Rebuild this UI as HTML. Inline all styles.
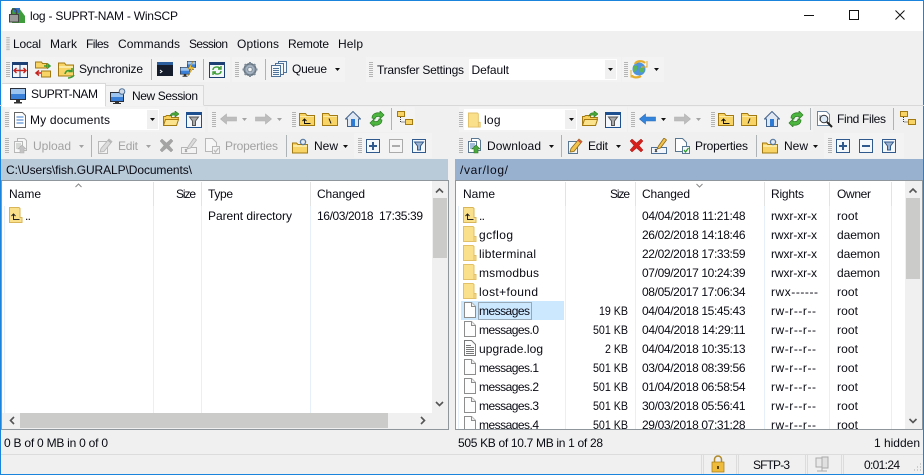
<!DOCTYPE html>
<html><head><meta charset="utf-8"><style>
html,body{margin:0;padding:0;background:#eff0ef;width:924px;height:475px;overflow:hidden}
svg{display:block;position:absolute;left:0;top:0}
text{font-family:"Liberation Sans",sans-serif;font-size:12px;fill:#0a0a14}
.d{fill:#a2a2a2}
.g{filter:grayscale(1) opacity(.45)}
</style></head><body>
<svg width="924" height="475" viewBox="0 0 924 475" xmlns="http://www.w3.org/2000/svg">
<defs>
<symbol id="grip" viewBox="0 0 4 16" overflow="visible"><path d="M0 .5h4M0 2.500h4M0 4.500h4M0 6.500h4M0 8.500h4M0 10.500h4M0 12.500h4M0 14.500h4" stroke="#b4b4b4" fill="none"/></symbol>
<symbol id="caret" viewBox="0 0 5 3" overflow="visible"><path d="M0 0h5L2.500 3z" fill="#111"/></symbol>
<symbol id="dfold" viewBox="0 0 16 16"><path d="M.5 .5h9.500l1 1v9h2v5H.5z" fill="#fbe08c" stroke="#e2c067"/><path d="M11 10.500v5" stroke="#e2c067"/></symbol>
<symbol id="dup" viewBox="0 0 16 16"><path d="M.5 .5h9.500l1 1v9h2v5H.5z" fill="#fbe08c" stroke="#d9b55a"/><path d="M4.500 7v5.500h6M2.500 9l2-2 2 2" stroke="#222" fill="none"/></symbol>
<symbol id="file" viewBox="0 0 16 16"><path d="M1.500 .5h7l4 4v11h-11z" fill="#fdfdfd" stroke="#8d8d8d"/><path d="M8.500 .5v4h4" fill="#eee" stroke="#8d8d8d"/></symbol>
<symbol id="log" viewBox="0 0 16 16"><path d="M1.500 .5h7l4 4v11h-11z" fill="#fdfdfd" stroke="#777"/><path d="M3 5.500h5M3 7.500h8M3 9.500h8M3 11.500h8M3 13.500h8" stroke="#777"/></symbol>
<symbol id="fo" viewBox="0 0 16 16"><path d="M.5 14.500V5.500h2l1-1h5v2h7l-2 8z" fill="#f7cf5a" stroke="#a37a12"/><path d="M.5 14.500l2-6h13l-2 6z" fill="#fbe38d" stroke="#a37a12"/><path d="M7 5c1-3 3-3.500 5-3V0l4 3-4 3V4c-2 0-3 0-5 1z" fill="#49a83a" stroke="#2c7a22" stroke-width=".6"/></symbol>
<symbol id="filt" viewBox="0 0 16 16"><rect x=".5" y=".5" width="15" height="15" fill="#f4f7fb" stroke="#1e4f8f"/><rect x="1" y="1" width="14" height="2" fill="#1e4f8f"/><path d="M3.500 5h9L9.500 9v4.500h-3V9z" fill="#a9a9a9" stroke="#555"/></symbol>
<symbol id="back" viewBox="0 0 18 12"><path d="M1 6L7 1v3h10v4H7v3z" fill="#3484dc" stroke="#2a6cb8" stroke-width=".6"/></symbol>
<symbol id="fwd" viewBox="0 0 18 12"><path d="M17 6l-6-5v3H1v4h10v3z" fill="#bdbdbd" stroke="#b0b0b0" stroke-width=".6"/></symbol>
<symbol id="par" viewBox="0 0 16 16"><path d="M.5 14.500v-12h6l1.500 2h7.500v10z" fill="#f7d465" stroke="#a37a12"/><path d="M1 5.500h14" stroke="#fbe9a6"/><path d="M5.500 8v4.500h6M3.500 10l2-2 2 2" stroke="#111" fill="none"/></symbol>
<symbol id="root" viewBox="0 0 16 16"><path d="M.5 14.500v-12h6l1.500 2h7.500v10z" fill="#f7d465" stroke="#a37a12"/><path d="M1 5.500h14" stroke="#fbe9a6"/><path d="M7 7.500l2 5" stroke="#111"/></symbol>
<symbol id="rootr" viewBox="0 0 16 16"><path d="M.5 14.500v-12h6l1.500 2h7.500v10z" fill="#f7d465" stroke="#a37a12"/><path d="M1 5.500h14" stroke="#fbe9a6"/><path d="M9 7.500l-2 5" stroke="#111"/></symbol>
<symbol id="home" viewBox="0 0 16 16"><path d="M8 .5L.5 8h2v7.500h11V8h2z" fill="#dfe7f2" stroke="#43648e"/><rect x="6" y="8" width="4" height="7" fill="#2e7bd6"/></symbol>
<symbol id="ref" viewBox="0 0 16 16"><path d="M3 7c0-4 4-6 8-5V0l4 4-4 4V5.500C8 5 6 6 6 8z" fill="#4cb53f" stroke="#2b7a22" stroke-width=".7"/><path d="M13 9c0 4-4 6-8 5v2l-4-4 4-4v2.500c3 .5 5-.5 5-2.500z" fill="#4cb53f" stroke="#2b7a22" stroke-width=".7"/></symbol>
<symbol id="tree" viewBox="0 0 16 16"><rect x=".5" y=".5" width="7" height="5" fill="#f7d465" stroke="#a37a12"/><rect x="8.500" y="8.500" width="7" height="5" fill="#f7d465" stroke="#a37a12"/><path d="M3.500 6v5h4" stroke="#333" stroke-dasharray="1 1" fill="none"/></symbol>
<symbol id="up" viewBox="0 0 16 16"><path d="M5.500 .5h7l2 2v10h-9z" fill="#fff" stroke="#5a7792"/><path d="M2.500 3.500h8v11h-8z" fill="#fff" stroke="#5a7792"/><path d="M4 6h5M4 8h5M4 10h3" stroke="#4a79b0"/><path d="M8 15V11H6l4-4 4 4h-2v4z" fill="#4ba83d" stroke="#2b7a22" stroke-width=".6"/></symbol>
<symbol id="edit" viewBox="0 0 16 16"><path d="M1.500 3.500h9v12h-9z" fill="#f3f7fb" stroke="#5a7792"/><path d="M3 14l1-3.500L12 1l3 2.500-8 10z" fill="#f2c24a" stroke="#8a6a20" stroke-width=".8"/><path d="M11 2l3 2.500" stroke="#d94a3a" stroke-width="1.500"/></symbol>
<symbol id="x" viewBox="0 0 15 15"><path d="M1 3l2-2 4.500 4L12 1l2 2-4 4.500 4 4.500-2 2-4.500-4L3 14l-2-2 4-4.500z" fill="#d5201b" stroke="#a81612" stroke-width=".5"/></symbol>
<symbol id="ren" viewBox="0 0 16 16"><rect x=".5" y="9.500" width="15" height="6" fill="#f3f7fb" stroke="#4e7199"/><path d="M4 11l2 3M6 11l-2 3" stroke="#333"/><path d="M6 11l1.500-3L13 0l2.500 2-6 8z" fill="#f2c24a" stroke="#8a6a20" stroke-width=".8"/></symbol>
<symbol id="prop" viewBox="0 0 16 16"><path d="M1.500 .5h7l4 4v9h-11z" fill="#fdfdfd" stroke="#5a7792"/><rect x="8.500" y="8.500" width="7" height="7" fill="#f5f8fb" stroke="#5a7792"/><path d="M10 12l1.500 2 3-4" stroke="#2f9a2f" fill="none" stroke-width="1.300"/></symbol>
<symbol id="nf" viewBox="0 0 16 16"><path d="M.5 15v-10h4l1.500 1.500h9.500V15z" fill="#f7d465" stroke="#a37a12"/><path d="M1 8h14" stroke="#fbe9a6" stroke-width="2"/><circle cx="11" cy="4" r="2.700" fill="#cfd9e6" stroke="#4e7199"/><circle cx="11" cy="4" r=".8" fill="#fff"/></symbol>
<symbol id="plus" viewBox="0 0 14 14"><rect x=".5" y=".5" width="13" height="13" fill="#f5f8fb" stroke="#30598e"/><path d="M3 7h8M7 3v8" stroke="#30598e" stroke-width="2"/></symbol>
<symbol id="minus" viewBox="0 0 14 14"><rect x=".5" y=".5" width="13" height="13" fill="#f5f8fb" stroke="#30598e"/><path d="M3 7h8" stroke="#30598e" stroke-width="2"/></symbol>
<symbol id="flt" viewBox="0 0 14 14"><rect x=".5" y=".5" width="13" height="13" fill="#f5f8fb" stroke="#30598e"/><path d="M2.500 3h9L8.500 7v4h-3V7z" fill="#9cb3cf" stroke="#30598e"/></symbol>
<symbol id="find" viewBox="0 0 17 17"><path d="M1.500 .5h9l3 3v11h-12z" fill="#fff" stroke="#6c86a1"/><path d="M3 5h5M3 7h3M3 9h3" stroke="#6c86a1"/><circle cx="8" cy="8" r="3.800" fill="#dce9f6" stroke="#333"/><path d="M11 11l5 5" stroke="#222" stroke-width="2"/></symbol>
<symbol id="mon" viewBox="0 0 16 16"><rect x=".5" y=".5" width="15" height="11" fill="#3a7fd8" stroke="#2a2f3a"/><path d="M1 1h14v5H1z" fill="#9cc4ef"/><path d="M6 12h4v2H6zM4 14h8v1.500H4z" fill="#333"/></symbol>
<symbol id="mons" viewBox="0 0 16 16"><rect x=".5" y="4.500" width="13" height="9" fill="#3a7fd8" stroke="#2a2f3a"/><path d="M1 5h12v4H1z" fill="#9cc4ef"/><path d="M5 14h4v1H5zM3 15h8v1H3z" fill="#333"/><circle cx="12" cy="3.500" r="2.800" fill="#cfd9e6" stroke="#4e7199"/></symbol>
</defs>

<!-- window frame -->
<rect width="924" height="475" fill="#eff0ef"/>
<rect width="924" height="31" fill="#fff"/>
<rect width="924" height="1" fill="#1a84dc"/>
<rect y="474" width="924" height="1" fill="#1a84dc"/>
<rect width="1" height="475" fill="#1a84dc"/><rect x="923" width="1" height="475" fill="#1a84dc"/>

<!-- title -->
<g>
<path d="M12 8h7l6 8v7H12z" fill="#3f9c3a"/><path d="M14 8h6v4l-3 2-3-2z" fill="#2e6fc4"/>
<rect x="9.500" y="14.500" width="9" height="7.500" fill="#9a9a9a" stroke="#444"/><path d="M11.500 14v-2.500a2.500 2.500 0 0 1 5 0V14" fill="none" stroke="#444" stroke-width="1.300"/>
</g>
<text x="30" y="20" textLength="148">log - SUPRT-NAM - WinSCP</text>
<path d="M804 15.500h10" stroke="#111"/>
<rect x="849.500" y="10.500" width="9" height="9" fill="none" stroke="#111"/>
<path d="M895.500 10.500l9 9M904.500 10.500l-9 9" stroke="#111"/>

<!-- menu -->
<use href="#grip" x="6" y="37" width="4" height="14"/>
<text x="13" y="48" textLength="28">Local</text><text x="50" y="48" textLength="27">Mark</text><text x="86" y="48" textLength="23">Files</text><text x="118" y="48" textLength="62">Commands</text><text x="189" y="48" textLength="39">Session</text><text x="237" y="48" textLength="42">Options</text><text x="288" y="48" textLength="41">Remote</text><text x="338" y="48" textLength="25">Help</text>

<!-- toolbar row 2 -->
<rect x="5" y="57" width="225" height="25" fill="#f2f3f2"/><rect x="232" y="57" width="113" height="25" fill="#f2f3f2"/><rect x="366" y="57" width="255" height="25" fill="#f2f3f2"/><rect x="622" y="57" width="42" height="25" fill="#f2f3f2"/>
<use href="#grip" x="6" y="62" width="4" height="16"/>
<rect x="12.500" y="62.500" width="15" height="15" fill="#f3f7fb" stroke="#1e3f73"/><rect x="13" y="63" width="14" height="2" fill="#1e3f73"/><path d="M20 63v14" stroke="#1e3f73"/><path d="M14 70.500h12M16.500 68l-2.500 2.500 2.500 2.500M23.500 68l2.500 2.500-2.500 2.500" stroke="#c9231d" fill="none" stroke-width="1.400"/>
<path d="M35.500 68v-6h6l1 1.500h4V68z" fill="#f7d465" stroke="#a37a12"/><path d="M41.500 77v-6h9v6z" fill="#f7d465" stroke="#a37a12"/><path d="M44 66h5M47 63.500l3 2.500-3 2.500" stroke="#3d9c35" stroke-width="1.500" fill="none"/><path d="M36 73h5M39 70.500l-3 2.500 3 2.500" stroke="#c9231d" stroke-width="1.500" fill="none"/>
<path d="M58.500 76v-13h6l1.500 2h7.500v11z" fill="#f7d465" stroke="#a37a12"/><path d="M59 67h14" stroke="#fbe9a6" stroke-width="2"/><path d="M65 74c1-4 4-4 7-3M72 68v3.500h-3.500M68 78c2 0 5-1 6-3" stroke="#3d9c35" stroke-width="1.500" fill="none"/>
<text x="79" y="73" textLength="64">Synchronize</text>
<path d="M151.500 59v21" stroke="#aeb3b6"/>
<rect x="157" y="62" width="16" height="14" fill="#151d2c"/><rect x="157" y="62" width="16" height="3" fill="#2c5e9e"/><path d="M160 70l2 1.500-2 1.500" stroke="#fff" fill="none"/>
<use href="#mon" x="187" y="61" width="9" height="9"/><use href="#mon" x="180" y="67" width="10" height="10"/><path d="M193 61l-5 8h3l-3 7 6-9h-3z" fill="#f2c23a" stroke="#a37a12" stroke-width=".4"/>
<path d="M203.500 59v21" stroke="#aeb3b6"/>
<rect x="209.500" y="62.500" width="15" height="15" fill="#f3f7fb" stroke="#1e3f73"/><rect x="210" y="63" width="14" height="2" fill="#1e3f73"/><path d="M213 70c0-3 4-4 7-2M221 66v3h-3M221 71c0 3-4 4-7 2M213 75v-3h3" stroke="#3d9c35" stroke-width="1.400" fill="none"/>
<use href="#grip" x="235" y="62" width="4" height="16"/>
<circle cx="250" cy="69.500" r="5.800" fill="#8f9eb0" stroke="#65727f" stroke-width="1.500"/><path d="M250 62v15M242.500 69.500h15M244.700 64.200l10.600 10.600M255.300 64.200l-10.600 10.600" stroke="#7d8a98" stroke-width="2"/><circle cx="250" cy="69.500" r="4.500" fill="#a4b2c1"/><circle cx="250" cy="69.500" r="2.200" fill="#f0f3f6" stroke="#65727f" stroke-width=".7"/>
<path d="M265.500 59v21" stroke="#aeb3b6"/>
<rect x="278.500" y="61.500" width="8" height="11" fill="#f5f8fb" stroke="#4e7199"/><rect x="275.500" y="63.500" width="8" height="11" fill="#f5f8fb" stroke="#4e7199"/><rect x="271.500" y="65.500" width="9" height="11" fill="#f5f8fb" stroke="#4e7199"/><path d="M273 68.500h6M273 70.500h6M273 72.500h6M273 74.500h6" stroke="#4e7199"/>
<text x="292" y="73" textLength="35">Queue</text>
<use href="#caret" x="335" y="68" width="5" height="3"/>
<use href="#grip" x="369" y="62" width="4" height="16"/>
<text x="377" y="74" textLength="87">Transfer Settings</text>
<rect x="469" y="59" width="148" height="21" fill="#fff"/><rect x="605" y="60" width="11" height="19" fill="#eff0ef"/>
<use href="#caret" x="608" y="68" width="5" height="3"/>
<text x="471.500" y="74" textLength="37.500">Default</text>
<use href="#grip" x="624" y="62" width="4" height="16"/>
<circle cx="639" cy="69" r="6.500" fill="#4d93dd"/><path d="M634 66c2-2 4 0 3 3s-3 4-4 1zM640 68c3-2 5 1 4 3s-4 2-4 0z" fill="#5bb55a"/><path d="M632 75c0 3 6 3 9 1M645 63c-3-3-9-2-10 1" stroke="#e5ae2d" stroke-width="2.200" fill="none"/><path d="M631 70v7h6M647 61v6h-6" stroke="#e5ae2d" fill="none" stroke-width="1"/>
<use href="#caret" x="654" y="68" width="5" height="3"/>

<!-- tabs -->
<path d="M0 105.500h924" stroke="#d8d8d8"/>
<rect x="106" y="85" width="98" height="21" fill="#f2f3f2"/><path d="M105.500 85.500h98v20" fill="none" stroke="#d9d9d9"/>
<rect x="2" y="83" width="103" height="24" fill="#fff"/><path d="M2 83.500h103.500v22" fill="none" stroke="#d9d9d9"/>
<use href="#mon" x="10" y="88" width="16" height="16"/>
<text x="31" y="98" textLength="67">SUPRT-NAM</text>
<use href="#mons" x="110" y="88" width="16" height="16"/>
<text x="132" y="100" textLength="66">New Session</text>

<!-- row 3 LEFT -->
<rect x="5" y="107" width="200" height="25" fill="#f2f3f2"/><rect x="208" y="107" width="82" height="25" fill="#f2f3f2"/><rect x="290" y="107" width="125" height="25" fill="#f2f3f2"/>
<use href="#grip" x="5" y="112" width="4" height="16"/>
<rect x="10" y="109" width="149" height="21" fill="#fff"/><rect x="147" y="110" width="11" height="19" fill="#eff0ef"/>
<use href="#caret" x="150" y="118" width="5" height="3"/>
<path d="M14.500 112.500h8l3 3v12h-11z" fill="#fff" stroke="#666"/><path d="M16.500 117h7M16.500 120h7M16.500 123h7" stroke="#3477c7"/>
<text x="30" y="124" textLength="80">My documents</text>
<use href="#fo" x="163" y="111" width="16" height="16"/>
<use href="#filt" x="186" y="112" width="16" height="16"/>
<use href="#grip" x="212" y="112" width="4" height="16"/>
<use href="#fwd" x="219" y="113" width="19" height="12" transform="matrix(-1 0 0 1 457 0)"/>
<use href="#caret" x="242" y="118" width="5" height="3" style="opacity:.35"/>
<use href="#fwd" x="254" y="113" width="19" height="12"/>
<use href="#caret" x="277" y="118" width="5" height="3" style="opacity:.35"/>
<use href="#grip" x="292" y="112" width="4" height="16"/>
<use href="#par" x="299" y="111" width="16" height="16"/>
<use href="#root" x="322" y="111" width="16" height="16"/>
<use href="#home" x="345" y="111" width="16" height="16"/>
<use href="#ref" x="369" y="111" width="16" height="16"/>
<path d="M391.500 108v22" stroke="#aeb3b6"/>
<use href="#tree" x="397" y="111" width="16" height="16"/>

<!-- row 4 LEFT -->
<rect x="354" y="133" width="78" height="25" fill="#f2f3f2"/>
<use href="#grip" x="5" y="138" width="4" height="16"/>
<use href="#up" x="12" y="138" width="16" height="16" class="g"/>
<text x="33" y="150" textLength="38" class="d">Upload</text>
<use href="#caret" x="79" y="145" width="5" height="3" style="opacity:.35"/>
<path d="M91.500 135v22" stroke="#aeb3b6"/>
<use href="#edit" x="97" y="138" width="16" height="16" class="g"/>
<text x="118" y="150" textLength="20" class="d">Edit</text>
<use href="#caret" x="146" y="145" width="5" height="3" style="opacity:.35"/>
<use href="#x" x="159" y="138" width="15" height="15" class="g"/>
<use href="#ren" x="181" y="138" width="16" height="16" class="g"/>
<use href="#prop" x="204" y="138" width="16" height="16" class="g"/>
<text x="225" y="150" textLength="53" class="d">Properties</text>
<path d="M286.500 135v22" stroke="#aeb3b6"/>
<use href="#nf" x="292" y="138" width="16" height="16"/>
<text x="314" y="150" textLength="24">New</text>
<use href="#caret" x="343" y="145" width="5" height="3"/>
<use href="#grip" x="358" y="138" width="4" height="16"/>
<use href="#plus" x="366" y="139" width="14" height="14"/>
<use href="#minus" x="389" y="139" width="14" height="14" class="g"/>
<use href="#flt" x="412" y="139" width="14" height="14"/>

<!-- row 3 RIGHT -->
<rect x="459" y="107" width="168" height="25" fill="#f2f3f2"/><rect x="628" y="107" width="80" height="25" fill="#f2f3f2"/><rect x="708" y="107" width="105" height="25" fill="#f2f3f2"/>
<use href="#grip" x="459" y="112" width="4" height="16"/>
<rect x="464" y="109" width="113" height="21" fill="#fff"/><rect x="565" y="110" width="11" height="19" fill="#eff0ef"/>
<use href="#caret" x="569" y="118" width="5" height="3"/>
<use href="#dfold" x="468" y="112" width="15" height="16"/>
<text x="484" y="124" textLength="16.500">log</text>
<use href="#fo" x="582" y="111" width="16" height="16"/>
<use href="#filt" x="605" y="112" width="16" height="16"/>
<use href="#grip" x="631" y="112" width="4" height="16"/>
<use href="#back" x="638" y="113" width="19" height="12"/>
<use href="#caret" x="661" y="118" width="5" height="3"/>
<use href="#fwd" x="673" y="113" width="19" height="12"/>
<use href="#caret" x="696" y="118" width="5" height="3" style="opacity:.35"/>
<use href="#grip" x="711" y="112" width="4" height="16"/>
<use href="#par" x="718" y="111" width="16" height="16"/>
<use href="#rootr" x="741" y="111" width="16" height="16"/>
<use href="#home" x="764" y="111" width="16" height="16"/>
<use href="#ref" x="788" y="111" width="16" height="16"/>
<path d="M810.500 108v22" stroke="#aeb3b6"/>
<use href="#find" x="816" y="111" width="17" height="17"/>
<text x="837" y="123" textLength="49">Find Files</text>
<path d="M893.500 108v22" stroke="#aeb3b6"/>
<use href="#tree" x="900" y="111" width="16" height="16"/>

<!-- row 4 RIGHT -->
<rect x="824" y="133" width="80" height="25" fill="#f2f3f2"/>
<use href="#grip" x="459" y="138" width="4" height="16"/>
<use href="#up" x="466" y="138" width="16" height="16"/>
<text x="487" y="150" textLength="54">Download</text>
<use href="#caret" x="549" y="145" width="5" height="3"/>
<path d="M561.500 135v22" stroke="#aeb3b6"/>
<use href="#edit" x="567" y="138" width="16" height="16"/>
<text x="588" y="150" textLength="20">Edit</text>
<use href="#caret" x="616" y="145" width="5" height="3"/>
<use href="#x" x="629" y="138" width="15" height="15"/>
<use href="#ren" x="651" y="138" width="16" height="16"/>
<use href="#prop" x="674" y="138" width="16" height="16"/>
<text x="695" y="150" textLength="53">Properties</text>
<path d="M756.500 135v22" stroke="#aeb3b6"/>
<use href="#nf" x="762" y="138" width="16" height="16"/>
<text x="784" y="150" textLength="24">New</text>
<use href="#caret" x="813" y="145" width="5" height="3"/>
<use href="#grip" x="828" y="138" width="4" height="16"/>
<use href="#plus" x="836" y="139" width="14" height="14"/>
<use href="#minus" x="859" y="139" width="14" height="14"/>
<use href="#flt" x="882" y="139" width="14" height="14"/>

<!-- path bars -->
<rect x="1" y="159" width="447" height="21" fill="#b9cad9"/>
<rect x="455" y="159" width="468" height="21" fill="#98b1cf"/>
<text x="6" y="174" textLength="186">C:\Users\fish.GURALP\Documents\</text>
<text x="460" y="174" textLength="48">/var/log/</text>

<!-- LEFT panel -->
<rect x="1.500" y="180.500" width="447" height="249" fill="#eff0ef" stroke="#8f969c"/>
<rect x="2" y="181" width="430" height="232" fill="#fff"/>
<path d="M4.500 206v207M153.500 206v207M201.500 206v207M310.500 206v207" stroke="#e6effa"/>
<path d="M153.500 182v24M201.500 182v24M310.500 182v24" stroke="#e3e3e3"/>
<path d="M75.500 187l3-3 3 3" fill="none" stroke="#888"/>
<text x="9" y="198" textLength="32">Name</text><text x="176" y="198" textLength="20">Size</text><text x="208" y="198" textLength="25">Type</text><text x="317" y="198" textLength="48">Changed</text>
<use href="#dup" x="9" y="207" width="16" height="16"/>
<text x="25" y="220" textLength="6">..</text>
<text x="208" y="220" textLength="84">Parent directory</text>
<text x="317" y="220" textLength="106" xml:space="preserve">16/03/2018  17:35:39</text>
<!-- left v scroll -->
<rect x="432" y="181" width="16" height="232" fill="#eff0ef"/>
<rect x="433" y="198" width="14" height="60" fill="#cbccca"/>
<path d="M436 192.500l3.500-3.500 3.500 3.500" fill="none" stroke="#555" stroke-width="1.600"/>
<path d="M436 402l3.500 3.500 3.500-3.500" fill="none" stroke="#555" stroke-width="1.600"/>
<!-- left h scroll -->
<rect x="2" y="413" width="446" height="16" fill="#eff0ef"/>
<rect x="20" y="413" width="368" height="15" fill="#cbccca"/>
<path d="M14 417l-3.500 3.500 3.500 3.500" fill="none" stroke="#555" stroke-width="1.600"/>
<path d="M421 417l3.500 3.500-3.500 3.500" fill="none" stroke="#555" stroke-width="1.600"/>

<!-- RIGHT panel -->
<rect x="455.500" y="180.500" width="467" height="249" fill="#fff" stroke="#8f969c"/>
<path d="M458.500 206v223M565.500 206v223M635.500 206v223M764.500 206v223M829.500 206v223M891.500 206v223" stroke="#e6effa"/>
<path d="M565.500 182v24M635.500 182v24M764.500 182v24M829.500 182v24M891.500 182v24" stroke="#e3e3e3"/>
<path d="M696.500 184l3 3 3-3" fill="none" stroke="#888"/>
<text x="463" y="198" textLength="32">Name</text><text x="610" y="198" textLength="20">Size</text><text x="642" y="198" textLength="48">Changed</text><text x="771" y="198" textLength="33">Rights</text><text x="837" y="198" textLength="34">Owner</text>
<!-- selected -->
<rect x="461" y="301" width="103" height="19" fill="#cce8ff"/>
<rect x="478.500" y="302.500" width="53" height="17" fill="none" stroke="#444" stroke-width=".8" stroke-dasharray="1 1"/>

<use href="#dup" x="463" y="207" width="16" height="16"/><text x="479" y="220" textLength="6">..</text>
<text x="642" y="220" textLength="103.500">04/04/2018 11:21:48</text><text x="771" y="220" textLength="46">rwxr-xr-x</text><text x="837" y="220" textLength="21">root</text>

<use href="#dfold" x="463" y="226" width="16" height="16"/><text x="479" y="239" textLength="34">gcflog</text>
<text x="642" y="239" textLength="103.500">26/02/2018 14:18:46</text><text x="771" y="239" textLength="46">rwxr-xr-x</text><text x="837" y="239" textLength="43">daemon</text>

<use href="#dfold" x="463" y="245" width="16" height="16"/><text x="479" y="258" textLength="57">libterminal</text>
<text x="642" y="258" textLength="103.500">22/02/2018 17:33:59</text><text x="771" y="258" textLength="46">rwxr-xr-x</text><text x="837" y="258" textLength="43">daemon</text>

<use href="#dfold" x="463" y="264" width="16" height="16"/><text x="479" y="277" textLength="60">msmodbus</text>
<text x="642" y="277" textLength="103.500">07/09/2017 10:24:39</text><text x="771" y="277" textLength="46">rwxr-xr-x</text><text x="837" y="277" textLength="43">daemon</text>

<use href="#dfold" x="463" y="283" width="16" height="16"/><text x="479" y="296" textLength="59">lost+found</text>
<text x="642" y="296" textLength="103.500">08/05/2017 17:06:34</text><text x="771" y="296" textLength="47">rwx------</text><text x="837" y="296" textLength="21">root</text>

<use href="#file" x="463" y="302" width="16" height="16"/><text x="479" y="315" textLength="51">messages</text>
<text x="599" y="315" textLength="29" lengthAdjust="spacingAndGlyphs">19 KB</text><text x="642" y="315" textLength="103.500">04/04/2018 15:45:43</text><text x="771" y="315" textLength="45">rw-r--r--</text><text x="837" y="315" textLength="21">root</text>

<use href="#file" x="463" y="321" width="16" height="16"/><text x="479" y="334" textLength="60">messages.0</text>
<text x="593" y="334" textLength="35" lengthAdjust="spacingAndGlyphs">501 KB</text><text x="642" y="334" textLength="103.500">04/04/2018 14:29:11</text><text x="771" y="334" textLength="45">rw-r--r--</text><text x="837" y="334" textLength="21">root</text>

<use href="#log" x="463" y="340" width="16" height="16"/><text x="479" y="353" textLength="64">upgrade.log</text>
<text x="605" y="353" textLength="23" lengthAdjust="spacingAndGlyphs">2 KB</text><text x="642" y="353" textLength="103.500">04/04/2018 10:35:13</text><text x="771" y="353" textLength="45">rw-r--r--</text><text x="837" y="353" textLength="21">root</text>

<use href="#file" x="463" y="359" width="16" height="16"/><text x="479" y="372" textLength="60">messages.1</text>
<text x="593" y="372" textLength="35" lengthAdjust="spacingAndGlyphs">501 KB</text><text x="642" y="372" textLength="103.500">03/04/2018 08:39:56</text><text x="771" y="372" textLength="45">rw-r--r--</text><text x="837" y="372" textLength="21">root</text>

<use href="#file" x="463" y="378" width="16" height="16"/><text x="479" y="391" textLength="60">messages.2</text>
<text x="593" y="391" textLength="35" lengthAdjust="spacingAndGlyphs">501 KB</text><text x="642" y="391" textLength="103.500">01/04/2018 06:58:54</text><text x="771" y="391" textLength="45">rw-r--r--</text><text x="837" y="391" textLength="21">root</text>

<use href="#file" x="463" y="397" width="16" height="16"/><text x="479" y="410" textLength="60">messages.3</text>
<text x="593" y="410" textLength="35" lengthAdjust="spacingAndGlyphs">501 KB</text><text x="642" y="410" textLength="103.500">30/03/2018 05:56:41</text><text x="771" y="410" textLength="45">rw-r--r--</text><text x="837" y="410" textLength="21">root</text>

<use href="#file" x="463" y="416" width="16" height="16"/><text x="479" y="429" textLength="60">messages.4</text>
<text x="593" y="429" textLength="35" lengthAdjust="spacingAndGlyphs">501 KB</text><text x="642" y="429" textLength="103.500">29/03/2018 07:31:28</text><text x="771" y="429" textLength="45">rw-r--r--</text><text x="837" y="429" textLength="21">root</text>

<!-- right v scroll -->
<rect x="905" y="181" width="17" height="248" fill="#eff0ef"/>
<rect x="906" y="198" width="14" height="81" fill="#cbccca"/>
<path d="M909.500 192.500l3.500-3.500 3.500 3.500" fill="none" stroke="#555" stroke-width="1.600"/>
<path d="M909.500 419l3.500 3.500 3.500-3.500" fill="none" stroke="#555" stroke-width="1.600"/>
<!-- bottom cover for clipped row -->
<rect x="1" y="430" width="922" height="24" fill="#eff0ef"/>
<path d="M455.500 429.500h467M455.500 180.500v249M922.500 180.500v249" stroke="#8f969c" fill="none"/>
<path d="M1.500 429.500h447" stroke="#8f969c"/>

<!-- status -->
<text x="4" y="447" textLength="104">0 B of 0 MB in 0 of 0</text>
<text x="458" y="447" textLength="145">505 KB of 10.7 MB in 1 of 28</text>
<text x="874" y="447" textLength="46">1 hidden</text>
<path d="M1 454.500h922" stroke="#dcdcdc"/>
<path d="M701.500 455v19M703.500 455v19M736.500 455v19M738.500 455v19M805.500 455v19M807.500 455v19M841.500 455v19M843.500 455v19" stroke="#dcdcdc"/>
<path d="M714.500 462v-2.500a3.500 3.500 0 0 1 7 0V462" fill="none" stroke="#b08a2a" stroke-width="1.500"/>
<rect x="712" y="462" width="12" height="10" fill="#eebc3a" stroke="#a37a12" stroke-width=".7"/><rect x="717" y="466" width="2" height="3" fill="#5a4310"/>
<text x="753" y="469" textLength="37">SFTP-3</text>
<g class="g"><rect x="816" y="458" width="11" height="9" fill="#dce2ea" stroke="#555"/><rect x="822" y="457" width="6" height="11" fill="#ccc" stroke="#555"/><path d="M822 468v3M817 471h10" stroke="#555"/></g>
<text x="864" y="469" textLength="36">0:01:24</text>
<path d="M920 464h1M917 467h1M920 467h1M914 470h1M917 470h1M920 470h1" stroke="#a8a8a8"/>
</svg>
</body></html>
